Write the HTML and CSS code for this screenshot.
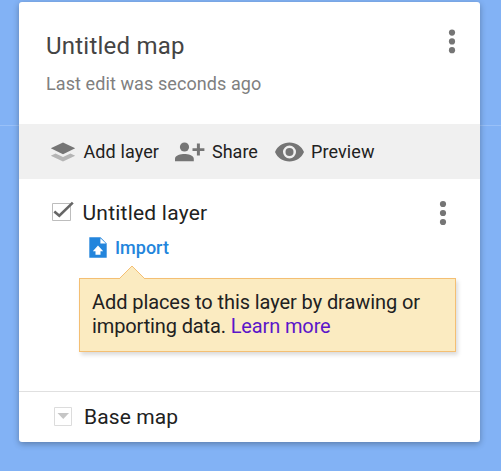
FILE: index.html
```html
<!DOCTYPE html>
<html lang="en">
<head>
<meta charset="utf-8">
<title>Untitled map</title>
<link rel="stylesheet" href="styles.css">
</head>
<body>
<main class="panel">
  <header class="header">
    <div class="heading">
      <h1 class="title">Untitled map</h1>
      <p class="subtitle">Last edit was seconds ago</p>
    </div>
    <svg class="dots" width="8" height="26" viewBox="0 0 8 26"><circle cx="4" cy="3.6" r="3.1"/><circle cx="4" cy="12.4" r="3.1"/><circle cx="4" cy="21.2" r="3.1"/></svg>
  </header>
  <nav class="toolbar">
    <a class="tool tool-add">
      <svg width="26" height="22" viewBox="0 0 26 22"><path fill="#b5b5b5" d="M.8 14.800 5.500 12.400 13 16 20.500 12.400 25.200 14.800 13 20.600z"/><path d="M13 1.500 25.200 7.300 13 13.300.8 7.300z"/></svg>
      <span>Add layer</span>
    </a>
    <a class="tool tool-share">
      <svg width="30" height="20" viewBox="0 0 30 20"><circle cx="9.500" cy="5" r="4.600"/><path d="M0 19.200v-2.400C0 13.400 6 12 9.400 12s9.400 1.400 9.400 4.800v2.400zM21.900 1.400h3v4.800h4.500v2.700h-4.500v4.700h-3V8.900h-4.400V6.200h4.400z"/></svg>
      <span>Share</span>
    </a>
    <a class="tool tool-preview">
      <svg width="30" height="20" viewBox="0 0 30 20"><path fill-rule="evenodd" d="M0 10C2.300 4.200 8 .5 14.500.5S26.600 4.200 29 10c-2.400 5.800-8 9.500-14.500 9.500S2.300 15.800 0 10zm14.500-6.500a6.500 6.500 0 1 0 0 13 6.500 6.500 0 0 0 0-13z"/><circle cx="14.500" cy="10" r="4"/></svg>
      <span>Preview</span>
    </a>
  </nav>
  <section class="layer">
    <div class="layer-row">
      <svg class="check" width="24" height="22" viewBox="0 0 24 22"><path fill="#fff" stroke="#bdbdbd" d="M.5 2.500h18v17h-18z"/><path fill="none" stroke="#666" stroke-width="2.600" d="M2.300 10.500 7.300 14.800 20.800 1.600"/></svg>
      <span class="layer-name">Untitled layer</span>
      <svg class="dots" width="8" height="26" viewBox="0 0 8 26"><circle cx="4" cy="4" r="3.1"/><circle cx="4" cy="13" r="3.1"/><circle cx="4" cy="22" r="3.1"/></svg>
    </div>
    <a class="import">
      <svg width="18" height="21" viewBox="0 0 18 21"><path fill="#2385dc" d="M.3.300H11.500L17.700 6.500V20.700H.3z"/><path fill="#fff" d="M11.400 1.200v5.400h5.500zM9 8.500l5.200 5.800h-2.700v3.400h-5v-3.400H3.800z"/></svg>
      <span>Import</span>
    </a>
    <div class="tip">
      <svg class="tip-arrow" width="28" height="15" viewBox="0 0 28 15"><path fill="#fbebc1" d="M1 15v-1L14 1l13 13v1z"/><path fill="none" stroke="#f4bf73" d="M1 14 14 1l13 13"/></svg>
      <p class="tip-text"><span class="tip-first">Add places to this layer by drawing or</span><br><span class="tip-second">importing data. <a class="link">Learn more</a></span></p>
    </div>
  </section>
  <footer class="base">
    <svg width="19" height="20" viewBox="0 0 19 20"><path fill="#fff" stroke="#dcdcdc" d="M.5.500h17v18h-17z"/><path fill="#c6c6c6" d="M3.500 6h11.500L9.250 12z"/></svg>
    <span class="base-name">Base map</span>
  </footer>
</main>
</body>
</html>
```
FILE: styles.css
```css
* { box-sizing: border-box; }
body {
  margin: 0;
  padding: 2px 21px 0 19px;
  height: 471px;
  overflow: hidden;
  background: linear-gradient(#98c0f8, #98c0f8) 0 125px / 100% 1px no-repeat #82b2f5;
  font-family: Roboto, sans-serif;
  color: #212121;
}
h1, p { margin: 0; font-weight: 400; }
svg { display: block; flex: none; fill: #757575; }
span { white-space: nowrap; }
.panel {
  height: 440px;
  display: flex;
  flex-direction: column;
  background: #fff;
  border-radius: 3px;
  overflow: hidden;
  box-shadow: 0 2px 6px rgba(0, 0, 0, .3);
}
.header {
  height: 122px;
  display: flex;
  justify-content: space-between;
  padding: 27px 24px 0 27px;
}
.title { font-size: 24px; line-height: 34px; letter-spacing: .22px; color: #444; }
.subtitle { margin-top: 9px; font-size: 18px; line-height: 24px; letter-spacing: .09px; color: #808080; }
.toolbar {
  height: 55px;
  display: flex;
  align-items: center;
  background: #f0f0f0;
  padding-left: 31px;
  font-size: 18px;
}
.tool { display: flex; align-items: center; height: 24px; }
.tool-add { width: 125px; gap: 7.5px; letter-spacing: .1px; }
.tool-share { width: 100px; gap: 7px; }
.tool-preview { gap: 6px; letter-spacing: .1px; }
.layer { height: 212px; padding: 19px 24px 0 33px; }
.layer-row { display: flex; align-items: center; height: 28px; }
.layer-name { margin: 1px 0 0 6.5px; font-size: 21px; letter-spacing: .22px; }
.layer-row .dots { margin: 1px 9px 0 auto; }
.import {
  display: flex;
  align-items: center;
  gap: 8px;
  height: 22px;
  margin: 10px 0 0 37px;
  font-size: 18px;
  font-weight: 500;
  color: #2385dc;
}
.tip {
  position: relative;
  height: 74px;
  margin: 20px 0 0 27px;
  padding: 11px 12px;
  background: #fbebc1;
  border: 1px solid #f4bf73;
  box-shadow: 2px 3px 4px rgba(0, 0, 0, .14);
}
.tip-arrow { position: absolute; left: 37.5px; top: -14px; }
.tip-text { font-size: 20px; line-height: 24px; }
.tip-first { letter-spacing: -.08px; }
.tip-second { letter-spacing: -.13px; }
.link { color: #5b16c9; }
.base {
  height: 51px;
  display: flex;
  align-items: center;
  gap: 11px;
  padding-left: 35px;
  border-top: 1px solid #e0e0e0;
  font-size: 21px;
}
.base-name { letter-spacing: .12px; }
```
